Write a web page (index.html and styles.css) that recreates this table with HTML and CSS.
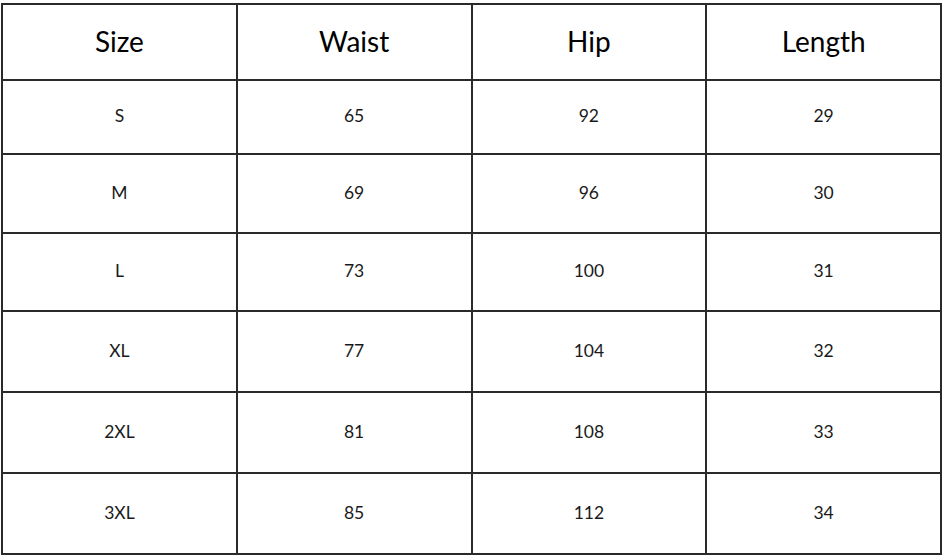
FILE: index.html
```html
<!DOCTYPE html>
<html>
<head>
<meta charset="utf-8">
<link rel="stylesheet" href="styles.css">
</head>
<body>
<table class="size-table">
  <thead>
    <tr class="row-h"><th>Size</th><th>Waist</th><th>Hip</th><th>Length</th></tr>
  </thead>
  <tbody>
    <tr class="row-1"><td>S</td><td>65</td><td>92</td><td>29</td></tr>
    <tr class="row-2"><td>M</td><td>69</td><td>96</td><td>30</td></tr>
    <tr class="row-3"><td>L</td><td>73</td><td>100</td><td>31</td></tr>
    <tr class="row-4"><td>XL</td><td>77</td><td>104</td><td>32</td></tr>
    <tr class="row-5"><td>2XL</td><td>81</td><td>108</td><td>33</td></tr>
    <tr class="row-6"><td>3XL</td><td>85</td><td>112</td><td>34</td></tr>
  </tbody>
</table>
</body>
</html>
```

FILE: styles.css
```css
html, body {
  margin: 0;
  padding: 0;
  background: #fff;
}
body {
  padding: 3px 0 0 1px;
}
.size-table {
  border-collapse: collapse;
  width: 941px;
  table-layout: fixed;
  font-family: Lato, "Open Sans", sans-serif;
  color: #111;
}
.size-table th,
.size-table td {
  border: 2px solid #2a2a2a;
  text-align: center;
  vertical-align: middle;
  padding: 0 0 3px 0;
}
.size-table th {
  font-size: 28px;
  font-weight: 400;
  color: #000;
}
.size-table td {
  font-size: 17.5px;
  color: #1a1a1a;
}
.row-h { height: 76px; }
.row-1 { height: 74px; }
.row-2 { height: 79px; }
.row-3 { height: 78px; }
.row-4 { height: 81px; }
.row-5 { height: 81px; }
.row-6 { height: 81px; }
```
